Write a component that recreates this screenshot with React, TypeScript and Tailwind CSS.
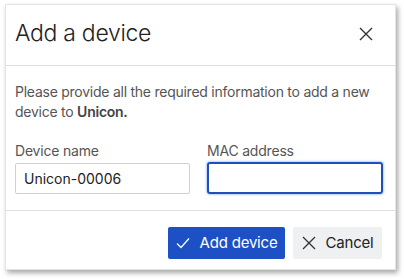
import React from "react";

export default function App() {
  return (
    <div className="w-[404px] h-[279px] bg-white pl-[5px] pt-[4px]" style={{ fontFamily: "Inter, 'Liberation Sans', sans-serif" }}>
      <div className="w-[391px] h-[266px] bg-white flex flex-col shadow-[2px_3px_5px_rgba(0,0,0,0.35)] border border-[#e4e4e4]">
        <div className="h-[61px] flex items-center justify-between pl-[9px] pr-[22px] pb-[3px] border-b border-[#dedede] shrink-0">
          <span className="text-[23px] font-light text-[#222] tracking-[-0.3px]">Add a device</span>
          <svg width="14" height="14" viewBox="0 0 14 14" className="text-[#333]">
            <path d="M1 1L13 13M13 1L1 13" stroke="currentColor" strokeWidth="1.4" fill="none" />
          </svg>
        </div>
        <div className="pl-[9px] pr-[8px] pt-[16px] border-b border-[#dedede] h-[145px] shrink-0">
          <p className="text-[14px] leading-[20px] text-[#555] tracking-[-0.25px]">
            Please provide all the required information to add a new device to <span className="font-semibold text-[#444]">Unicon.</span>
          </p>
          <div className="flex gap-[17px] mt-[20px]">
            <div className="flex flex-col w-[175px]">
              <label className="text-[14px] leading-[18px] text-[#555] mb-[3px] tracking-[-0.2px]">Device name</label>
              <div className="h-[31px] border border-[#d0d0d0] rounded-[2px] flex items-center px-[8px] text-[14px] text-[#222]">Unicon-00006</div>
            </div>
            <div className="flex flex-col w-[176px]">
              <label className="text-[14px] leading-[18px] text-[#555] mb-[2px] tracking-[-0.2px]">MAC address</label>
              <div className="h-[32px] border-[2px] border-[#1f4fb8] rounded-[3px] shadow-[0_0_2px_1px_rgba(90,150,255,0.45)]"></div>
            </div>
          </div>
        </div>
        <div className="flex justify-end items-start gap-[8px] pt-[16px] pr-[13px]">
          <button className="h-[32px] w-[117px] bg-[#1d50c5] rounded-[2px] flex items-center justify-center gap-[10px] text-white text-[15px] tracking-[-0.2px]">
            <svg width="14" height="12" viewBox="0 0 14 12">
              <path d="M1 6.5L5 10.5L13 1.5" stroke="white" strokeWidth="1.3" fill="none" />
            </svg>
            <span>Add device</span>
          </button>
          <button className="h-[32px] w-[89px] bg-[#eef0f2] rounded-[2px] flex items-center justify-center gap-[10px] text-[#222] text-[15px] tracking-[-0.2px]">
            <svg width="14" height="14" viewBox="0 0 14 14">
              <path d="M1 1L13 13M13 1L1 13" stroke="#333" strokeWidth="1.3" fill="none" />
            </svg>
            <span>Cancel</span>
          </button>
        </div>
      </div>
    </div>
  );
}
